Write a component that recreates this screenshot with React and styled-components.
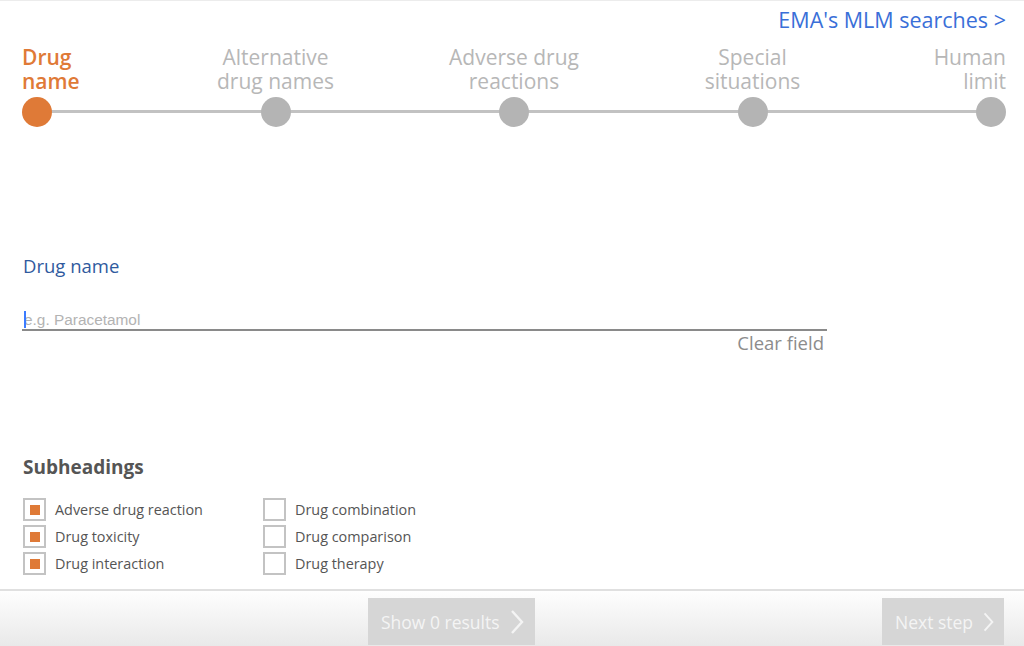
import React from "react";
import styled, { createGlobalStyle } from "styled-components";

const steps = [
  ["Drug", "name"],
  ["Alternative", "drug names"],
  ["Adverse drug", "reactions"],
  ["Special", "situations"],
  ["Human", "limit"],
];

const subheadings = [
  ["Adverse drug reaction", true],
  ["Drug combination", false],
  ["Drug toxicity", true],
  ["Drug comparison", false],
  ["Drug interaction", true],
  ["Drug therapy", false],
];

function Chevron() {
  return (
    <svg width="14" height="26" viewBox="0 0 14 26" fill="none">
      <polyline points="2,2 12,13 2,24" stroke="#f4f4f4" strokeWidth="2.4" />
    </svg>
  );
}

export default function App() {
  return (
    <Page>
      <GlobalStyle />
      <Main>
        <TopLink href="#">EMA's MLM searches &gt;</TopLink>
        <Stepper>
          {steps.map(([a, b], i) => (
            <Step key={a} $pos={i === 0 ? "start" : i === steps.length - 1 ? "end" : "center"}>
              <StepLabel $active={i === 0}>
                {a}
                <br />
                {b}
              </StepLabel>
              <Dot $active={i === 0} />
            </Step>
          ))}
        </Stepper>

        <Field>
          <FieldLabel>Drug name</FieldLabel>
          <InputWrap>
            <Input placeholder="e.g. Paracetamol" />
          </InputWrap>
          <ClearLink>Clear field</ClearLink>
        </Field>

        <Subheadings>
          <h3>Subheadings</h3>
          <CheckGrid>
            {subheadings.map(([label, checked]) => (
              <CheckRow key={label}>
                <Box $checked={checked} />
                {label}
              </CheckRow>
            ))}
          </CheckGrid>
        </Subheadings>
      </Main>

      <Footer>
        <ActionButton $width={167}>
          Show 0 results <Chevron />
        </ActionButton>
        <ActionButton $width={122}>
          Next step <Chevron />
        </ActionButton>
      </Footer>
    </Page>
  );
}

const GlobalStyle = createGlobalStyle`
  body {
    margin: 0;
    font-family: "Open Sans", "Noto Sans", sans-serif;
    background: #fff;
  }
  * { box-sizing: border-box; }
`;

const Page = styled.div`
  height: 100vh;
  display: flex;
  flex-direction: column;
  border-top: 1px solid #ececec;
  overflow: hidden;
`;

const Main = styled.div`
  flex: 1;
  display: flex;
  flex-direction: column;
  padding: 0 18px 0 22px;
`;

const TopLink = styled.a`
  align-self: flex-end;
  margin-top: 7px;
  font-size: 21.5px;
  line-height: 24px;
  color: #3a6fd8;
  text-decoration: none;
`;

const Stepper = styled.div`
  margin-top: 13px;
  display: flex;
  justify-content: space-between;
  position: relative;

  &::before {
    content: "";
    position: absolute;
    left: 15px;
    right: 15px;
    bottom: 14px;
    height: 3px;
    background: #c2c2c2;
  }
`;

const Step = styled.div`
  width: 30px;
  display: flex;
  flex-direction: column;
  align-items: ${(p) => (p.$pos === "start" ? "flex-start" : p.$pos === "end" ? "flex-end" : "center")};
  text-align: ${(p) => (p.$pos === "start" ? "left" : p.$pos === "end" ? "right" : "center")};
  position: relative;
  z-index: 1;
`;

const StepLabel = styled.div`
  white-space: nowrap;
  font-size: 21px;
  line-height: 24px;
  font-weight: ${(p) => (p.$active ? 600 : 400)};
  color: ${(p) => (p.$active ? "#df7a37" : "#b7b7b7")};
`;

const Dot = styled.div`
  margin-top: 4px;
  width: 30px;
  height: 30px;
  border-radius: 50%;
  background: ${(p) => (p.$active ? "#df7a37" : "#b4b4b4")};
`;

const Field = styled.div`
  margin-top: 127px;
  width: 805px;
  display: flex;
  flex-direction: column;
`;

const FieldLabel = styled.label`
  font-size: 18.5px;
  line-height: 24px;
  color: #2f5a9e;
  padding-left: 1px;
`;

const InputWrap = styled.div`
  margin-top: 28px;
  position: relative;

  &::before {
    content: "";
    position: absolute;
    left: 2px;
    top: 5px;
    width: 2px;
    height: 17px;
    background: #3b7bff;
  }
`;

const Input = styled.input`
  width: 100%;
  height: 25px;
  border: none;
  border-bottom: 2px solid #8a8a8a;
  outline: none;
  padding: 4px 0 0 2px;
  font-family: "Liberation Sans", Arial, sans-serif;
  font-size: 15.4px;
  background: transparent;

  &::placeholder {
    color: #b3b3b3;
  }
`;

const ClearLink = styled.span`
  align-self: flex-end;
  margin-top: 1px;
  padding-right: 3px;
  font-size: 18.5px;
  line-height: 22px;
  color: #8c8c8c;
`;

const Subheadings = styled.div`
  margin-top: 101px;

  h3 {
    margin: 0 0 17px 1px;
    font-size: 19px;
    line-height: 24px;
    font-weight: 700;
    color: #555;
  }
`;

const CheckGrid = styled.div`
  display: grid;
  grid-template-columns: 240px 240px;
  grid-auto-rows: 27px;
  padding-left: 1px;
`;

const CheckRow = styled.label`
  display: flex;
  align-items: center;
  gap: 9px;
  font-size: 14.4px;
  color: #555;
`;

const Box = styled.span`
  width: 23px;
  height: 23px;
  border: 2px solid #c3c3c3;
  display: flex;
  align-items: center;
  justify-content: center;

  &::after {
    content: "";
    width: 10px;
    height: 10px;
    background: ${(p) => (p.$checked ? "#df7a37" : "transparent")};
  }
`;

const Footer = styled.div`
  height: 57px;
  border-top: 2px solid #e0e0e0;
  background: linear-gradient(#fefefe, #e9e9e9);
  display: flex;
  align-items: flex-end;
  justify-content: space-between;
  padding: 0 20px 1px 368px;
`;

const ActionButton = styled.button`
  width: ${(p) => p.$width}px;
  height: 47px;
  padding: 0 10px 0 13px;
  border: none;
  background: #d6d6d6;
  color: #f4f4f4;
  font-family: "Open Sans", sans-serif;
  font-size: 17.5px;
  white-space: nowrap;
  display: flex;
  align-items: center;
  gap: 10px;
`;
